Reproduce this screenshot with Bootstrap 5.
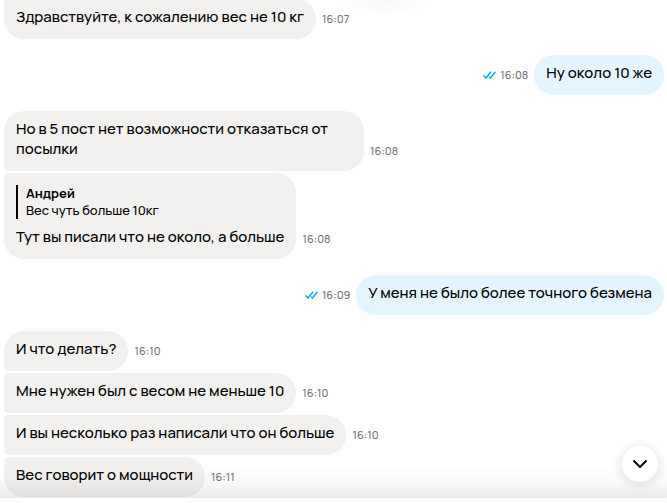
<!DOCTYPE html>
<html lang="ru">
<head>
<meta charset="utf-8">
<meta name="viewport" content="width=device-width, initial-scale=1">
<title>Чат</title>
<link href="https://cdn.jsdelivr.net/npm/bootstrap@5.3.0/dist/css/bootstrap.min.css" rel="stylesheet">
<style>
body { font-family: Manrope, Inter, "Noto Sans", sans-serif; font-size: 15px; font-weight: 500; line-height: 20px; color: #000; background: #fff; }
.chat { padding: 0 3px 6px 4px; }
.thread { gap: 16px; }
.series { gap: 2px; }
.msg { gap: 6px; }
.bubble { max-width: 360px; padding: 8px 12px 12px; border-radius: 20px; background: #f2f1ef; }
.bubble.own { background: #e4f5ff; }
.bubble.starts { border-bottom-left-radius: 4px; }
.bubble.inner { border-top-left-radius: 4px; border-bottom-left-radius: 4px; }
.bubble.ends { border-top-left-radius: 4px; }
.bubble.reply { padding-top: 12px; }
.quote { border-left: 2px solid #000; padding-left: 8px; margin: 0 0 8px; font-size: 13px; line-height: 17px; }
.stamp { font-size: 11px; line-height: 16px; color: #757575; padding-bottom: 12px; gap: 4px; }
.fade-bottom { left: 0; right: 0; bottom: 5px; height: 36px; background: linear-gradient(rgba(0,0,0,0), rgba(0,0,0,.025) 55%, rgba(0,0,0,.08)); pointer-events: none; }
.fade-top { left: 50%; top: -20px; width: 104px; height: 40px; background: radial-gradient(closest-side, rgba(0,0,0,.03), rgba(0,0,0,0)); pointer-events: none; }
.to-end { right: 9px; bottom: 21px; width: 36px; height: 36px; background: #fff; box-shadow: 0 1px 12px rgba(0,0,0,.14); }
</style>
</head>
<body>
<main class="chat vh-100 position-relative overflow-hidden d-flex flex-column justify-content-end">
  <div class="thread d-flex flex-column">
    <div class="series d-flex flex-column">
      <div class="msg d-flex align-items-end"><div class="bubble ends">Здравствуйте, к сожалению вес не 10 кг</div><time class="stamp">16:07</time></div>
    </div>
    <div class="series d-flex flex-column">
      <div class="msg d-flex align-items-end justify-content-end">
        <div class="stamp d-flex align-items-center"><svg width="13" height="8" viewBox="0 0 13 8" fill="none" stroke="#00aaff" stroke-width="1.500" role="img" aria-label="Прочитано"><path d="M.5 4.500 3 7 8 .8M6 5.700 7.500 7l5-6.200"/></svg><time>16:08</time></div>
        <div class="bubble own">Ну около 10 же</div>
      </div>
    </div>
    <div class="series d-flex flex-column">
      <div class="msg d-flex align-items-end"><div class="bubble starts">Но в 5 пост нет возможности отказаться от посылки</div><time class="stamp">16:08</time></div>
      <div class="msg d-flex align-items-end">
        <div class="bubble reply ends">
          <blockquote class="quote"><div class="fw-bold">Андрей</div><div>Вес чуть больше 10кг</div></blockquote>
          <div>Тут вы писали что не около, а больше</div>
        </div>
        <time class="stamp">16:08</time>
      </div>
    </div>
    <div class="series d-flex flex-column">
      <div class="msg d-flex align-items-end justify-content-end">
        <div class="stamp d-flex align-items-center"><svg width="13" height="8" viewBox="0 0 13 8" fill="none" stroke="#00aaff" stroke-width="1.500" role="img" aria-label="Прочитано"><path d="M.5 4.500 3 7 8 .8M6 5.700 7.500 7l5-6.200"/></svg><time>16:09</time></div>
        <div class="bubble own">У меня не было более точного безмена</div>
      </div>
    </div>
    <div class="series d-flex flex-column">
      <div class="msg d-flex align-items-end"><div class="bubble starts">И что делать?</div><time class="stamp">16:10</time></div>
      <div class="msg d-flex align-items-end"><div class="bubble inner">Мне нужен был с весом не меньше 10</div><time class="stamp">16:10</time></div>
      <div class="msg d-flex align-items-end"><div class="bubble inner">И вы несколько раз написали что он больше</div><time class="stamp">16:10</time></div>
      <div class="msg d-flex align-items-end"><div class="bubble ends">Вес говорит о мощности</div><time class="stamp">16:11</time></div>
    </div>
  </div>
  <div class="fade-top position-absolute"></div>
  <div class="fade-bottom position-absolute"></div>
  <button type="button" class="to-end position-absolute border-0 rounded-circle p-0 d-flex align-items-center justify-content-center" aria-label="Вниз"><svg width="16" height="10" viewBox="0 0 16 10" fill="none" stroke="#000" stroke-width="2"><path d="M1.500 1.500 8 8l6.500-6.500"/></svg></button>
</main>
<script src="https://cdn.jsdelivr.net/npm/bootstrap@5.3.0/dist/js/bootstrap.bundle.min.js"></script>
</body>
</html>
